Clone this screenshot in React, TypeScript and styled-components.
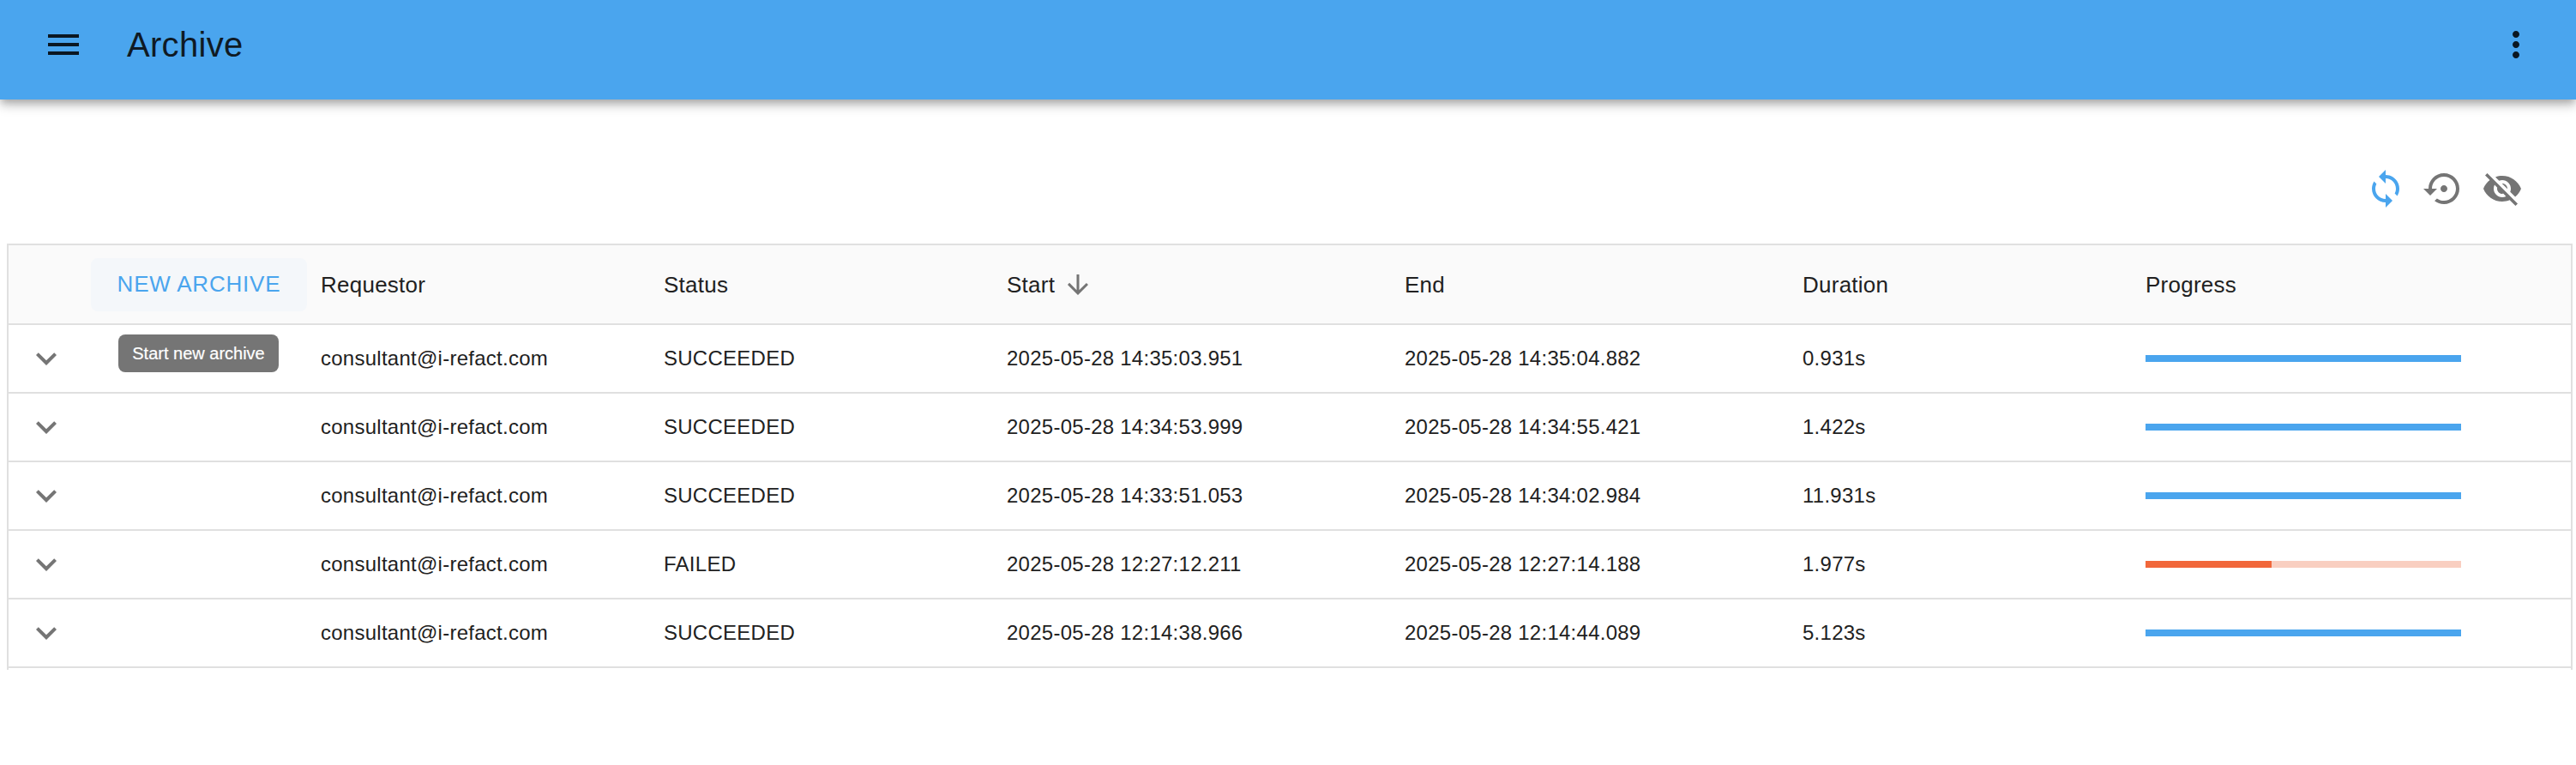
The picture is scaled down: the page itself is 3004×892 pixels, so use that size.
import React from "react";
import styled, { createGlobalStyle } from "styled-components";

const Global = createGlobalStyle`
  html, body { margin: 0; padding: 0; background: #fff; }
  body { font-family: "Liberation Sans", Arial, sans-serif; color: #212121; }
`;

const Page = styled.div`
  width: 3004px;
  min-height: 892px;
  background: #fff;
  overflow: hidden;
`;

const AppBar = styled.header`
  position: relative;
  height: 116px;
  display: flex;
  align-items: center;
  padding: 0 46px 12px 50px;
  box-sizing: border-box;
  background: #4aa5ee;
  color: #0b1722;
  box-shadow: 0 4px 8px -2px rgba(0, 0, 0, 0.2), 0 8px 10px 0 rgba(0, 0, 0, 0.14), 0 2px 20px 0 rgba(0, 0, 0, 0.12);
`;

const Title = styled.h1`
  flex: 1;
  margin: 0 0 0 50px;
  font-size: 40px;
  line-height: 48px;
  font-weight: 400;
  letter-spacing: 0.3px;
  color: #0f1a24;
`;

const Icon = styled.svg<{ $size?: number; $color?: string }>`
  display: block;
  flex: none;
  width: ${(p) => p.$size ?? 48}px;
  height: ${(p) => p.$size ?? 48}px;
  fill: ${(p) => p.$color ?? "currentColor"};
`;

const Toolbar = styled.div`
  display: flex;
  justify-content: flex-end;
  gap: 20px;
  padding: 80px 62px 40px 0;
`;

const TableFrame = styled.div`
  position: relative;
  margin: 0 4px 0 8px;
  border: solid #e0e0e0;
  border-width: 2px 2px 0 2px;
  padding-bottom: 2px;
`;

const Row = styled.div<{ $head?: boolean }>`
  display: grid;
  grid-template-columns: 364px 400px 400px 464px 464px 400px 1fr;
  align-items: center;
  height: ${(p) => (p.$head ? 93 : 80)}px;
  box-sizing: border-box;
  border-bottom: 2px solid #e0e0e0;
  background: ${(p) => (p.$head ? "#fafafa" : "#fff")};
`;

const HeadCell = styled.div`
  display: flex;
  align-items: center;
  gap: 9px;
  font-size: 26px;
  line-height: 36px;
  letter-spacing: 0.25px;
  color: #212121;
`;

const Cell = styled.div`
  font-size: 24px;
  line-height: 34px;
  letter-spacing: 0.257px;
  color: #212121;
  white-space: nowrap;
`;

const ExpandCell = styled.div`
  padding-left: 20px;
`;

const NewButton = styled.button`
  display: block;
  width: 252px;
  height: 62px;
  margin: 0 0 0 96px;
  padding: 0 0 2px;
  border: none;
  border-radius: 8px;
  background: #f4f7fa;
  color: #4aa5ee;
  font-family: inherit;
  font-size: 26px;
  line-height: 1;
  letter-spacing: 0.8px;
  text-transform: uppercase;
`;

const Tooltip = styled.div`
  position: absolute;
  left: 128px;
  top: 104px;
  width: 187px;
  height: 44px;
  border-radius: 8px;
  background: #757575;
  color: #fff;
  font-size: 20px;
  line-height: 44px;
  text-align: center;
  -webkit-text-stroke: 0.2px #fff;
`;

const Track = styled.div<{ $failed?: boolean }>`
  width: 368px;
  height: 8px;
  background: ${(p) => (p.$failed ? "#f9cfc1" : "#4aa5ee")};
  overflow: hidden;
`;

const Fill = styled.div<{ $failed?: boolean }>`
  height: 100%;
  background: ${(p) => (p.$failed ? "#f1673a" : "#4aa5ee")};
`;

const Menu = () => (
  <Icon viewBox="0 0 24 24"><path d="M3 18h18v-2H3zm0-5h18v-2H3zm0-7v2h18V6z" /></Icon>
);
const More = () => (
  <Icon viewBox="0 0 24 24"><path d="M12 8c1.1 0 2-.9 2-2s-.9-2-2-2-2 .9-2 2 .9 2 2 2zm0 2c-1.1 0-2 .9-2 2s.9 2 2 2 2-.9 2-2-.9-2-2-2zm0 6c-1.1 0-2 .9-2 2s.9 2 2 2 2-.9 2-2-.9-2-2-2z" /></Icon>
);
const Sync = () => (
  <Icon viewBox="0 0 24 24" $color="#4aa5ee"><path d="M12 4V1L8 5l4 4V6c3.31 0 6 2.69 6 6 0 1.01-.25 1.97-.7 2.8l1.46 1.46C19.54 15.03 20 13.57 20 12c0-4.42-3.58-8-8-8zm0 14c-3.31 0-6-2.69-6-6 0-1.01.25-1.97.7-2.8L5.24 7.74C4.46 8.97 4 10.43 4 12c0 4.42 3.58 8 8 8v3l4-4-4-4v3z" /></Icon>
);
const Restore = () => (
  <Icon viewBox="0 0 24 24" $color="#757575"><path d="M14 12c0-1.1-.9-2-2-2s-2 .9-2 2 .9 2 2 2 2-.9 2-2zm-2-9c-4.97 0-9 4.03-9 9H0l4 4 4-4H5c0-3.87 3.13-7 7-7s7 3.13 7 7-3.13 7-7 7c-1.51 0-2.91-.49-4.06-1.3l-1.42 1.44C8.04 20.3 9.94 21 12 21c4.97 0 9-4.03 9-9s-4.03-9-9-9z" /></Icon>
);
const EyeOff = () => (
  <Icon viewBox="0 0 24 24" $color="#757575"><path d="M12 7c2.76 0 5 2.24 5 5 0 .65-.13 1.26-.36 1.83l2.92 2.92c1.51-1.26 2.7-2.89 3.43-4.75-1.73-4.39-6-7.5-11-7.5-1.4 0-2.74.25-3.98.7l2.16 2.16C10.74 7.13 11.35 7 12 7zM2 4.27l2.28 2.28.46.46C3.08 8.3 1.78 10.02 1 12c1.73 4.39 6 7.5 11 7.5 1.55 0 3.03-.3 4.38-.84l.42.42L19.73 22 21 20.73 3.27 3 2 4.27zM7.53 9.8l1.55 1.55c-.05.21-.08.43-.08.65 0 1.66 1.34 3 3 3 .22 0 .44-.03.65-.08l1.55 1.55c-.67.33-1.41.53-2.2.53-2.76 0-5-2.24-5-5 0-.79.2-1.53.53-2.2zm4.31-.78l3.15 3.15.02-.16c0-1.66-1.34-3-3-3l-.17.01z" /></Icon>
);
const ArrowDown = () => (
  <Icon viewBox="0 0 24 24" $size={36} $color="#757575"><path d="M20 12l-1.41-1.41L13 16.17V4h-2v12.17l-5.58-5.59L4 12l8 8 8-8z" /></Icon>
);
const Chevron = () => (
  <Icon viewBox="0 0 24 24" $color="#757575"><path d="M16.59 8.59 12 13.17 7.41 8.59 6 10l6 6 6-6z" /></Icon>
);

const rows = [
  { status: "SUCCEEDED", start: "2025-05-28 14:35:03.951", end: "2025-05-28 14:35:04.882", duration: "0.931s", progress: 100 },
  { status: "SUCCEEDED", start: "2025-05-28 14:34:53.999", end: "2025-05-28 14:34:55.421", duration: "1.422s", progress: 100 },
  { status: "SUCCEEDED", start: "2025-05-28 14:33:51.053", end: "2025-05-28 14:34:02.984", duration: "11.931s", progress: 100 },
  { status: "FAILED", start: "2025-05-28 12:27:12.211", end: "2025-05-28 12:27:14.188", duration: "1.977s", progress: 40 },
  { status: "SUCCEEDED", start: "2025-05-28 12:14:38.966", end: "2025-05-28 12:14:44.089", duration: "5.123s", progress: 100 },
];

export default function App() {
  return (
    <Page>
      <Global />
      <AppBar>
        <Menu />
        <Title>Archive</Title>
        <More />
      </AppBar>
      <Toolbar>
        <Sync />
        <Restore />
        <EyeOff />
      </Toolbar>
      <TableFrame>
        <Row $head>
          <div><NewButton>New Archive</NewButton></div>
          <HeadCell>Requestor</HeadCell>
          <HeadCell>Status</HeadCell>
          <HeadCell>Start<ArrowDown /></HeadCell>
          <HeadCell>End</HeadCell>
          <HeadCell>Duration</HeadCell>
          <HeadCell>Progress</HeadCell>
        </Row>
        {rows.map((r) => (
          <Row key={r.start}>
            <ExpandCell><Chevron /></ExpandCell>
            <Cell>consultant@i-refact.com</Cell>
            <Cell>{r.status}</Cell>
            <Cell>{r.start}</Cell>
            <Cell>{r.end}</Cell>
            <Cell>{r.duration}</Cell>
            <Track $failed={r.status === "FAILED"}>
              <Fill $failed={r.status === "FAILED"} style={{ width: `${r.progress}%` }} />
            </Track>
          </Row>
        ))}
        <Tooltip>Start new archive</Tooltip>
      </TableFrame>
    </Page>
  );
}
